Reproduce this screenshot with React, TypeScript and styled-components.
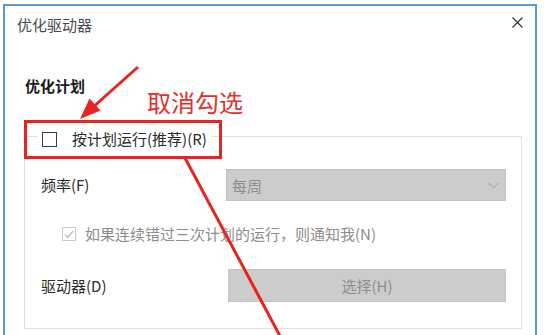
import React from "react";
import styled, { createGlobalStyle } from "styled-components";

const Global = createGlobalStyle`
  html, body { margin: 0; padding: 0; background: #ffffff; }
  body { font-family: "Noto Sans CJK SC", "Noto Sans", sans-serif; }
  * { box-sizing: border-box; }
`;

const Page = styled.div`
  position: relative;
  width: 547px;
  height: 335px;
  overflow: hidden;
  background: #ffffff;
  padding: 4px 0 0 3px;
`;

const Window = styled.div`
  width: 534px;
  height: 340px;
  border: 2px solid #5b98d6;
  border-bottom: none;
  background: #ffffff;
  display: flex;
  flex-direction: column;
`;

const TitleBar = styled.div`
  height: 36px;
  display: flex;
  align-items: center;
  justify-content: space-between;
  padding: 0 12px 0 12px;
`;

const Title = styled.div`
  font-size: 15px;
  line-height: 20px;
  color: #4a4a4a;
  margin-top: 2px;
`;

const CloseIcon = styled.svg`
  width: 11px;
  height: 11px;
  margin-top: -4px;
`;

const Heading = styled.div`
  margin: 34px 0 0 20px;
  font-size: 15px;
  line-height: 20px;
  font-weight: 700;
  color: #1a1a1a;
`;

const GroupBox = styled.div`
  margin: 40px 13px 0 19px;
  border: 1px solid #dedede;
  padding: 0 13px 26px 16px;
  display: flex;
  flex-direction: column;
`;

const Legend = styled.div`
  margin: -9px 0 0 -3px;
  height: 22px;
  padding: 0 5px 0 4px;
  background: #ffffff;
  align-self: flex-start;
  display: flex;
  align-items: center;
  gap: 15px;
`;

const Box = styled.span<{ $disabled?: boolean; $size: number }>`
  width: ${(p) => p.$size}px;
  height: ${(p) => p.$size}px;
  border: 1.5px solid ${(p) => (p.$disabled ? "#c9c9c9" : "#3a3a3a")};
  background: #ffffff;
  display: inline-flex;
  align-items: center;
  justify-content: center;
  flex-shrink: 0;
`;

const Label = styled.span<{ $muted?: boolean }>`
  font-size: 15px;
  line-height: 20px;
  color: ${(p) => (p.$muted ? "#8c8c8c" : "#2a2a2a")};
  white-space: nowrap;
`;

const FieldRow = styled.div<{ $top: number; $h: number }>`
  margin-top: ${(p) => p.$top}px;
  height: ${(p) => p.$h}px;
  display: grid;
  grid-template-columns: 185px 280px;
  align-items: center;
`;

const CheckRow = styled.div`
  margin: 23px 0 0 21px;
  height: 20px;
  display: flex;
  align-items: center;
  gap: 9px;
`;

const Select = styled.div`
  height: 32px;
  background: #cccccc;
  border: 1px solid #c3c3c3;
  display: flex;
  align-items: center;
  justify-content: space-between;
  padding: 0 6px 0 5px;
  font-size: 15px;
  color: #8e8e8e;
`;

const Button = styled.div`
  height: 33px;
  background: #cccccc;
  border: 1px solid #c3c3c3;
  display: flex;
  align-items: center;
  justify-content: center;
  font-size: 15px;
  color: #8e8e8e;
  margin-left: 2px;
`;

const Overlay = styled.svg`
  position: absolute;
  left: 0;
  top: 0;
  width: 547px;
  height: 335px;
  pointer-events: none;
`;

const Highlight = styled.div`
  position: absolute;
  left: 24px;
  top: 120px;
  width: 198px;
  height: 39px;
  border: 3px solid #e62420;
`;

const Note = styled.div`
  position: absolute;
  left: 147px;
  top: 88px;
  font-size: 24px;
  line-height: 28px;
  color: #e3302c;
  letter-spacing: 0px;
`;

export default function App() {
  return (
    <>
      <Global />
      <Page>
        <Window>
          <TitleBar>
            <Title>优化驱动器</Title>
            <CloseIcon viewBox="0 0 11 11">
              <path d="M0.5 0.5 L10.5 10.5 M10.5 0.5 L0.5 10.5" stroke="#333" strokeWidth="1.2" fill="none" />
            </CloseIcon>
          </TitleBar>
          <Heading>优化计划</Heading>
          <GroupBox>
            <Legend>
              <Box $size={15} />
              <Label>按计划运行(推荐)(R)</Label>
            </Legend>
            <FieldRow $top={19} $h={32}>
              <Label>频率(F)</Label>
              <Select>
                <span>每周</span>
                <svg width="11" height="7" viewBox="0 0 11 7">
                  <path d="M0.5 0.8 L5.5 5.8 L10.5 0.8" stroke="#a9a9a9" strokeWidth="1.1" fill="none" />
                </svg>
              </Select>
            </FieldRow>
            <CheckRow>
              <Box $size={14} $disabled>
                <svg width="10" height="9" viewBox="0 0 10 9">
                  <path d="M0.8 4.6 L3.6 7.4 L9.2 1" stroke="#b5b5b5" strokeWidth="1.2" fill="none" />
                </svg>
              </Box>
              <Label $muted>如果连续错过三次计划的运行，则通知我(N)</Label>
            </CheckRow>
            <FieldRow $top={25} $h={33}>
              <Label>驱动器(D)</Label>
              <Button>选择(H)</Button>
            </FieldRow>
          </GroupBox>
        </Window>
        <Highlight />
        <Note>取消勾选</Note>
        <Overlay viewBox="0 0 547 335">
          <line x1="138" y1="67" x2="92" y2="108" stroke="#e62420" strokeWidth="3" />
          <polygon points="80,119 100.5,110.5 89.5,98.5" fill="#e62420" />
          <line x1="185" y1="158" x2="280" y2="336" stroke="#e62420" strokeWidth="3" />
        </Overlay>
      </Page>
    </>
  );
}
